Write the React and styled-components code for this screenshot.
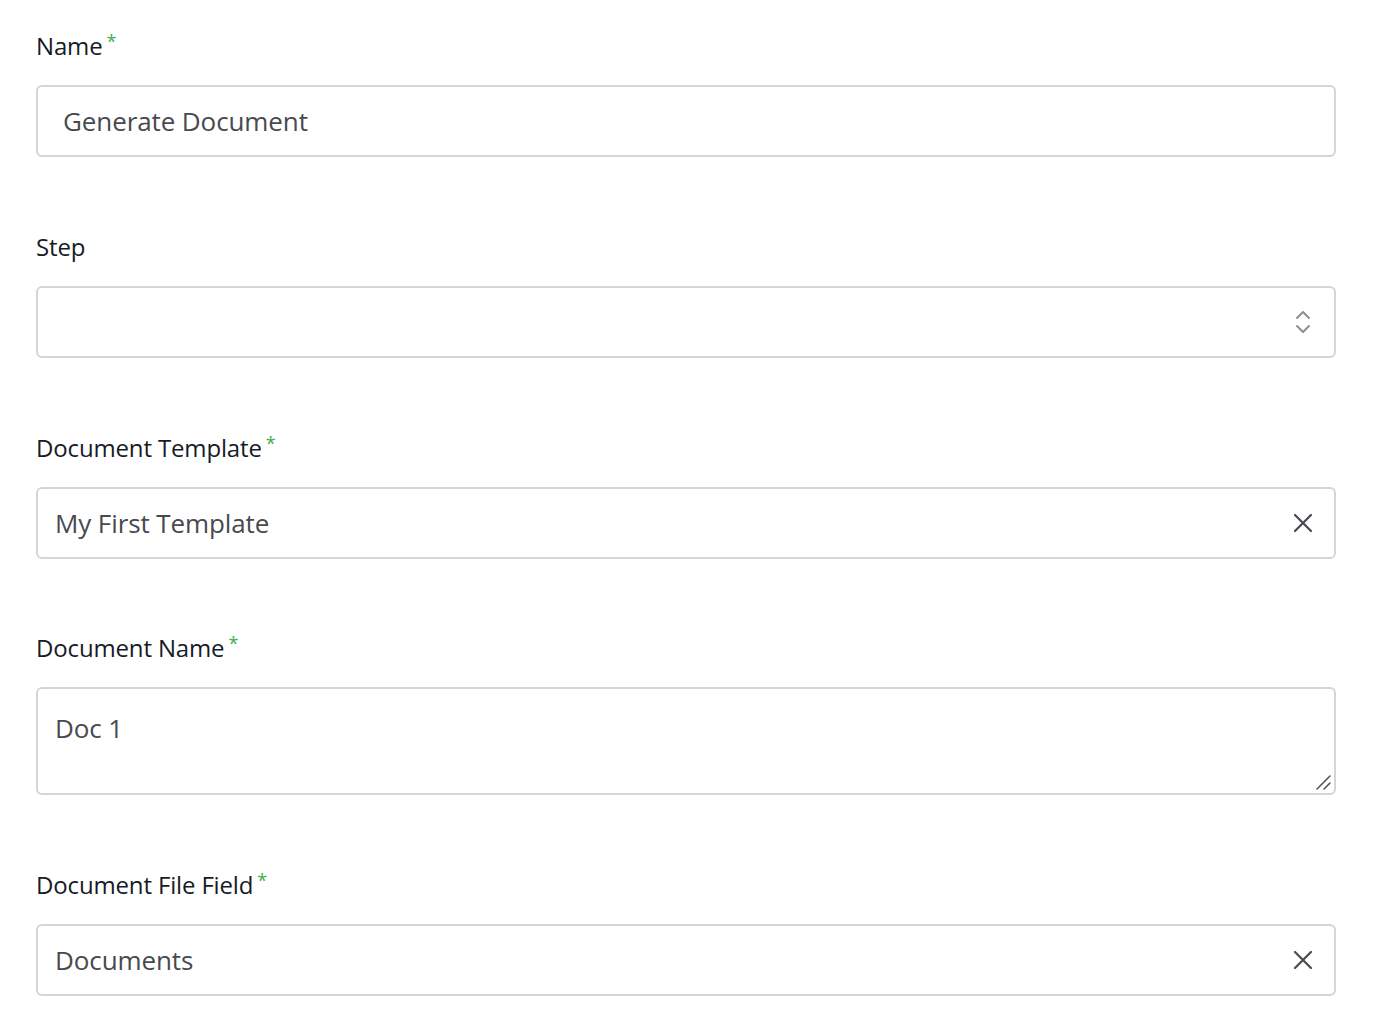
import React from "react";
import styled, { createGlobalStyle } from "styled-components";

const Global = createGlobalStyle`
  * { box-sizing: border-box; }
  body {
    margin: 0;
    background: #ffffff;
    font-family: "Open Sans", "Lato", sans-serif;
  }
`;

const Form = styled.div`
  display: flex;
  flex-direction: column;
  gap: 74.8px;
  padding: 31px 56px 0 36px;
`;

const Field = styled.div`
  display: flex;
  flex-direction: column;
  gap: 24px;
`;

const Label = styled.label`
  display: flex;
  align-items: flex-start;
  height: 30px;
  line-height: 30px;
  font-size: 24px;
  font-weight: 500;
  letter-spacing: -0.15px;
  color: #161b27;
`;

const Required = styled.span`
  margin-left: 4px;
  margin-top: 1px;
  font-size: 18px;
  line-height: 18px;
  color: #3fae49;
`;

const Box = styled.div`
  position: relative;
  display: flex;
  align-items: center;
  height: ${(p) => p.$height || 72}px;
  border: 2px solid #d3d5d9;
  border-radius: 6px;
  padding: 0 ${(p) => p.$padRight || 17}px 0 ${(p) => p.$padLeft || 17}px;
  background: #fff;
`;

const Value = styled.span`
  flex: 1;
  font-size: 26px;
  letter-spacing: -0.1px;
  color: #474a4f;
`;

const TextArea = styled(Box)`
  align-items: flex-start;
  padding-top: 21px;
`;

const IconSlot = styled.span`
  display: flex;
  align-items: center;
  justify-content: center;
  width: 24px;
  color: #4a4d52;
`;

const Grip = styled.svg`
  position: absolute;
  right: 2px;
  bottom: 2px;
`;

const Clear = () => (
  <svg width="20" height="20" viewBox="0 0 20 20" fill="none">
    <path d="M2 2L18 18M18 2L2 18" stroke="#474a4f" strokeWidth="2.2" strokeLinecap="round" />
  </svg>
);

const UpDown = () => (
  <svg width="16" height="26" viewBox="0 0 16 26" fill="none">
    <path d="M2 9L8 3L14 9M2 17L8 23L14 17" stroke="#8c9096" strokeWidth="2" strokeLinecap="round" strokeLinejoin="round" />
  </svg>
);

const Req = () => <Required>*</Required>;

export default function App() {
  return (
    <>
      <Global />
      <Form>
        <Field>
          <Label>
            Name
            <Req />
          </Label>
          <Box $padLeft={25}>
            <Value>Generate Document</Value>
          </Box>
        </Field>

        <Field>
          <Label>Step</Label>
          <Box $padRight={19}>
            <Value />
            <IconSlot>
              <UpDown />
            </IconSlot>
          </Box>
        </Field>

        <Field>
          <Label>
            Document Template
            <Req />
          </Label>
          <Box $padRight={19}>
            <Value>My First Template</Value>
            <IconSlot>
              <Clear />
            </IconSlot>
          </Box>
        </Field>

        <Field>
          <Label>
            Document Name
            <Req />
          </Label>
          <TextArea $height={108}>
            <Value>Doc 1</Value>
            <Grip width="18" height="18" viewBox="0 0 18 18">
              <path d="M3 16L16 3M10 16L16 10" stroke="#555" strokeWidth="1.6" strokeLinecap="round" />
            </Grip>
          </TextArea>
        </Field>

        <Field>
          <Label>
            Document File Field
            <Req />
          </Label>
          <Box $padRight={19}>
            <Value>Documents</Value>
            <IconSlot>
              <Clear />
            </IconSlot>
          </Box>
        </Field>
      </Form>
    </>
  );
}
